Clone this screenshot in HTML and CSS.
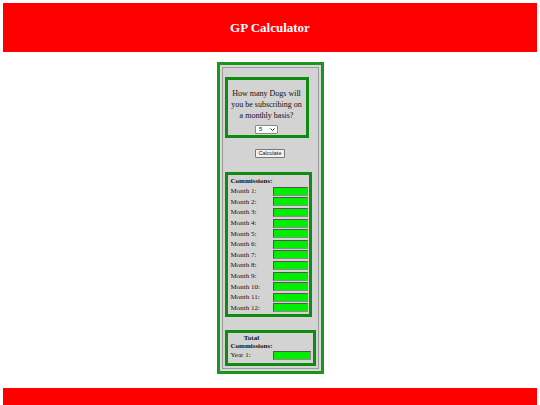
FILE: index.html
```
<!DOCTYPE html>
<html>
<head>
<meta charset="utf-8">
<title>GP Calculator</title>
<link rel="stylesheet" href="styles.css">
</head>
<body>
<header class="top"><h1 class="top-title">GP Calculator</h1></header>
<main class="wrap">
  <div class="outer">
    <div class="inner">
      <div class="box ask">
        <p class="question">How many Dogs will you be subscribing on a monthly basis?</p>
        <span class="select-wrap">
          <select class="dogs"><option>5</option></select>
          <svg class="chev" width="5" height="3" viewBox="0 0 5 3"><path d="M0.5 0.5 L2.5 2.5 L4.5 0.5" fill="none" stroke="#222" stroke-width="0.9"/></svg>
        </span>
      </div>
      <div class="btn-row"><button class="calc">Calculate</button></div>
      <div class="box comm">
        <div class="title">Commissions:</div>
        <div class="row"><span class="lbl">Month 1:</span><input class="val"></div>
        <div class="row"><span class="lbl">Month 2:</span><input class="val"></div>
        <div class="row"><span class="lbl">Month 3:</span><input class="val"></div>
        <div class="row"><span class="lbl">Month 4:</span><input class="val"></div>
        <div class="row"><span class="lbl">Month 5:</span><input class="val"></div>
        <div class="row"><span class="lbl">Month 6:</span><input class="val"></div>
        <div class="row"><span class="lbl">Month 7:</span><input class="val"></div>
        <div class="row"><span class="lbl">Month 8:</span><input class="val"></div>
        <div class="row"><span class="lbl">Month 9:</span><input class="val"></div>
        <div class="row"><span class="lbl">Month 10:</span><input class="val"></div>
        <div class="row"><span class="lbl">Month 11:</span><input class="val"></div>
        <div class="row"><span class="lbl">Month 12:</span><input class="val"></div>
      </div>
      <div class="box total">
        <div class="total-title">Total Commissions:</div>
        <div class="row year"><span class="lbl">Year 1:</span><input class="val"></div>
      </div>
    </div>
  </div>
</main>
<footer class="bottom"></footer>
</body>
</html>
```
FILE: styles.css
```
html, body {
  margin: 0;
  padding: 0;
  background: #ffffff;
}
body {
  padding: 3px 3px 0 3px;
  font-family: "Liberation Serif", "Times New Roman", serif;
  color: #111;
}
.top {
  height: 49px;
  background: #ff0000;
  display: flex;
  align-items: center;
  justify-content: center;
}
.top-title {
  margin: 0;
  font-size: 13px;
  font-weight: bold;
  color: #ffffff;
}
.wrap {
  display: flex;
  justify-content: center;
  margin-top: 10px;
}
.outer {
  width: 107px;
  box-sizing: border-box;
  border: 3px solid #1a961a;
  background: #d8d8d8;
  padding: 2px;
}
.inner {
  border: 1px solid #9a9a9a;
  background: #d3d3d3;
  padding: 9px 2px 2px 2px;
  display: flex;
  flex-direction: column;
  align-items: flex-start;
}
.box {
  box-sizing: border-box;
  border: 3px solid #108a10;
}
.ask {
  width: 84px;
  height: 61px;
  padding: 8px 2px 0 2px;
  display: flex;
  flex-direction: column;
  align-items: center;
}
.question {
  margin: 0;
  font-size: 8px;
  line-height: 11px;
  text-align: center;
}
.select-wrap {
  position: relative;
  display: flex;
  margin-top: 4px;
  width: 23px;
  height: 9px;
  font-size: 6px;
  line-height: 9px;
}
.dogs {
  appearance: none;
  -webkit-appearance: none;
  box-sizing: border-box;
  width: 23px;
  height: 9px;
  min-height: 0;
  margin: 0;
  padding: 0 0 0 3px;
  border: 1px solid #8a8a8a;
  border-radius: 1px;
  background: #ffffff;
  font-family: "Liberation Sans", Arial, sans-serif;
  font-size: 6px;
  line-height: 7px;
  color: #111;
}
.chev {
  position: absolute;
  right: 3px;
  top: 3px;
}
.btn-row {
  align-self: stretch;
  display: flex;
  justify-content: center;
  margin-top: 11px;
}
.calc {
  box-sizing: border-box;
  width: 30px;
  height: 9px;
  padding: 0;
  margin: 0;
  border: 1px solid #777;
  border-radius: 1px;
  background: #f2f2f2;
  font-family: "Liberation Sans", Arial, sans-serif;
  font-size: 5.5px;
  line-height: 7px;
  color: #111;
}
.comm {
  width: 87px;
  margin-top: 14px;
  padding: 1px 1px 0.8px 3px;
}
.title {
  font-size: 7px;
  font-weight: bold;
  line-height: 10px;
}
.row {
  display: grid;
  grid-template-columns: 42px 35px;
  align-items: center;
  height: 10.6px;
  font-size: 7px;
}
.val {
  box-sizing: border-box;
  width: 35px;
  height: 9px;
  margin: 0;
  padding: 0;
  border: 1px solid #555;
  border-right-color: #8a8a8a;
  border-bottom-color: #8a8a8a;
  background: #00ee00;
}
.total {
  width: 91px;
  margin-top: 13px;
  padding: 1px 2px 2px 3px;
}
.total-title {
  width: 42px;
  font-size: 7px;
  font-weight: bold;
  line-height: 8px;
  text-align: center;
}
.year {
  grid-template-columns: 42px 38px;
  height: 11px;
}
.year .val {
  width: 38px;
}
.bottom {
  margin-top: 14px;
  height: 17px;
  background: #ff0000;
}
```
